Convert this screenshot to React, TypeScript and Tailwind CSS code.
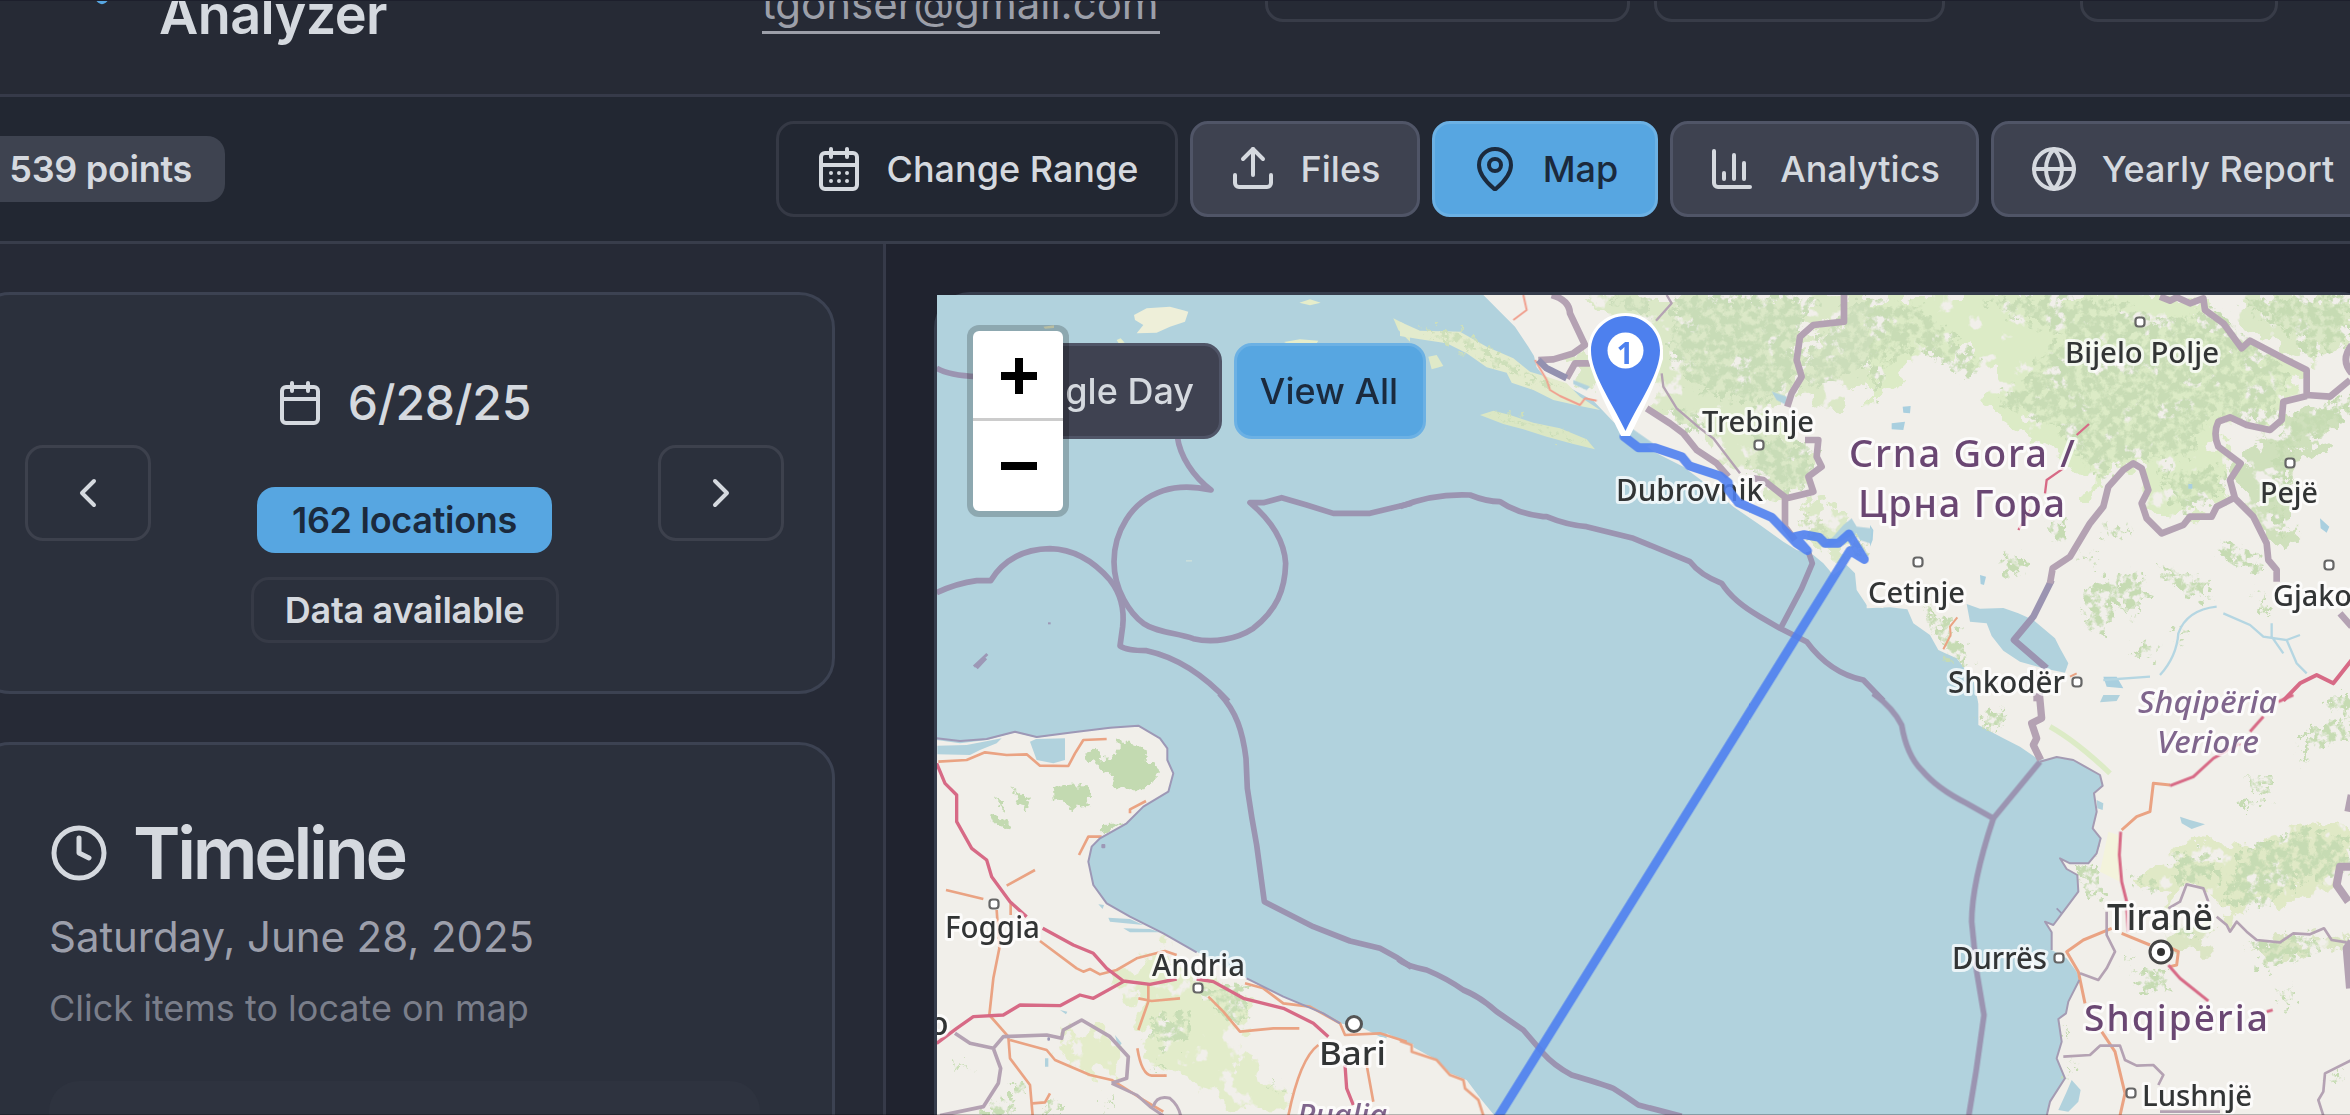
import React from "react";
import {
  Calendar,
  CalendarDays,
  ChevronLeft,
  ChevronRight,
  Clock,
  Globe,
  MapPin,
} from "lucide-react";

type Pt = { x: number; y: number };

function UploadIcon() {
  return (
    <svg className="size-12 shrink-0" viewBox="0 0 24 24" fill="none" stroke="currentColor" strokeWidth="2" strokeLinecap="round" strokeLinejoin="round">
      <path d="M21 15v4a2 2 0 0 1-2 2H5a2 2 0 0 1-2-2v-4" />
      <path d="M17 7l-5-5-5 5" />
      <path d="M12 2v13" />
    </svg>
  );
}

function ChartIcon() {
  return (
    <svg className="size-12 shrink-0" viewBox="0 0 24 24" fill="none" stroke="currentColor" strokeWidth="2" strokeLinecap="round" strokeLinejoin="round">
      <path d="M3 3v16a2 2 0 0 0 2 2h16" />
      <path d="M8 17v-3" />
      <path d="M13 17V5" />
      <path d="M18 17V9" />
    </svg>
  );
}

function NavButton({ tone, icon, label, className = "" }: { tone: "outline" | "solid" | "active"; icon: React.ReactNode; label: string; className?: string }) {
  const tones = {
    outline: "border-[#353945] bg-[#222732] text-[#d5d9df]",
    solid: "border-[#505567] bg-[#3e4250] text-[#d5d9df]",
    active: "border-[#6cb1e4] bg-[#57a6e1] text-[#1b2a3d]",
  };
  return (
    <button className={`flex h-24 shrink-0 items-center justify-center gap-6 whitespace-nowrap rounded-[18px] border-[3px] pb-px pr-px text-[36px] font-medium ${tones[tone]} ${className}`}>
      {icon}
      {label}
    </button>
  );
}

function Header() {
  return (
    <header className="flex h-[97px] shrink-0 items-start overflow-hidden border-b-[3px] border-[#363a49] bg-[#262a35]">
      <MapPin className="-mt-[65px] ml-[66px] size-[72px] shrink-0 text-[#57a6e1]" strokeWidth={2} />
      <h1 className="-mt-[18px] ml-[21px] w-[603px] shrink-0 text-[54px] font-semibold leading-[66px] tracking-[-0.6px] text-[#d5d9df]">Analyzer</h1>
      <a className="-mt-[26px] h-[60px] w-[398px] shrink-0 whitespace-nowrap border-b-[3px] border-[#9c9fa9] text-[42px] leading-[60px] text-[#9c9fa9]">tgonser@gmail.com</a>
      <div className="-mt-[74px] ml-[105px] h-24 w-[365px] shrink-0 rounded-[18px] border-[3px] border-[#383c48]" />
      <div className="-mt-[74px] ml-[24px] h-24 w-[291px] shrink-0 rounded-[18px] border-[3px] border-[#383c48]" />
      <div className="-mt-[74px] ml-[135px] h-24 w-[198px] shrink-0 rounded-[18px] border-[3px] border-[#383c48]" />
    </header>
  );
}

function Toolbar() {
  return (
    <div className="flex h-[147px] shrink-0 items-center border-b-[3px] border-[#383d4b] bg-[#222732]">
      <div className="flex h-[66px] w-[225px] shrink-0 items-center justify-end whitespace-nowrap rounded-r-[18px] bg-[#3e4350] pb-px pr-[33px] text-[36px] font-semibold tracking-[-0.3px] text-[#d5d9df]">539 points</div>
      <div className="ml-[551px] flex gap-3">
        <NavButton className="w-[402px]" tone="outline" icon={<CalendarDays className="size-12 shrink-0" />} label="Change Range" />
        <NavButton className="w-[230px]" tone="solid" icon={<UploadIcon />} label="Files" />
        <NavButton className="w-[226px]" tone="active" icon={<MapPin className="size-12 shrink-0" />} label="Map" />
        <NavButton className="w-[309px]" tone="solid" icon={<ChartIcon />} label="Analytics" />
        <NavButton className="w-[383px]" tone="solid" icon={<Globe className="size-12 shrink-0" />} label="Yearly Report" />
      </div>
    </div>
  );
}

function StepButton({ children }: { children: React.ReactNode }) {
  return <button className="flex h-24 w-[126px] items-center justify-center rounded-[18px] border-[3px] border-[#3d414d] text-[#d5d9df]">{children}</button>;
}

function Sidebar() {
  return (
    <aside className="-ml-[74px] flex w-[960px] shrink-0 flex-col gap-12 border-r-[3px] border-[#363a49] bg-[#262a36] p-12">
      <section className="flex h-[402px] shrink-0 items-center justify-between rounded-[36px] border-[3px] border-[#3c4252] bg-[#2b303c] p-12">
        <StepButton><ChevronLeft className="size-12" /></StepButton>
        <div className="flex flex-col items-center gap-6">
          <div className="flex h-[120px] items-center gap-6 pr-0.5 text-[48px] font-medium tracking-[-0.2px] text-[#d5d9df]">
            <Calendar className="size-12" />
            6/28/25
          </div>
          <div className="flex h-[66px] w-[295px] items-center justify-center rounded-[18px] bg-[#57a6e1] pb-px text-[36px] font-semibold tracking-[-0.3px] text-[#1b2a3d]">162 locations</div>
          <div className="flex h-[66px] w-[308px] items-center justify-center rounded-[18px] border-[3px] border-[#363a46] pb-px text-[36px] font-semibold tracking-[-0.3px] text-[#d5d9df]">Data available</div>
        </div>
        <StepButton><ChevronRight className="size-12" /></StepButton>
      </section>
      <section className="h-[600px] shrink-0 rounded-[36px] border-[3px] border-[#3c4252] bg-[#2b303c] p-[72px]">
        <h2 className="flex h-[72px] items-center gap-6 text-[72px] font-semibold leading-none tracking-[-3.3px] text-[#d5d9df]">
          <Clock className="size-[60px]" />
          Timeline
        </h2>
        <p className="mt-[18px] text-[42px] leading-[60px] tracking-[-0.06px] text-[#9c9fab]">Saturday, June 28, 2025</p>
        <p className="mt-[17px] text-[36px] leading-[48px] text-[#7a7e8a]">Click items to locate on map</p>
        <div className="mt-[49px] h-[200px] rounded-[30px] bg-[#2e333f]" />
      </section>
    </aside>
  );
}

/* Tile artwork is drawn at three units per pixel. */
const TILE_W: Pt = { x: 930, y: 280 };
const TILE_N: Pt = { x: 1400, y: 280 };
const TILE_E: Pt = { x: 1870, y: 280 };
const TILE_SW: Pt = { x: 930, y: 695 };
const TILE_S: Pt = { x: 1400, y: 695 };
const TILE_SE: Pt = { x: 1870, y: 695 };

function Tile({ at, children }: { at: Pt; children: React.ReactNode }) {
  return <g transform={`translate(${at.x} ${at.y}) scale(0.33333)`}>{children}</g>;
}

const LAND = "#f1efea";
const WATER = "#b1d2dd";

function Land() {
  return (
    <g fill={LAND}>
      <Tile at={TILE_W}>
        <path d="M612 105L650 85 720 80 775 95 765 125 720 140 680 158 620 160 640 135 615 120Z" fill="#eeefd9" />
        <path d="M1108 68L1140 58 1172 68 1140 76ZM560 180L572 175 584 188 566 190ZM1062 186L1110 178 1165 182 1160 190 1070 190ZM340 140L372 136 372 144 345 146Z" fill="#e6edca" />
        <path d="M1390 115L1420 130 1440 150V185L1405 150Z" fill="#dfe9c6" />
        <path d="M768 840h18v5h-18Z" fill="#c9dedb" />
      </Tile>
      <Tile at={TILE_N}>
        <path d="M245 40L300 95 345 140 385 200 402 228 410 262 440 300 500 318 580 362 640 425 710 478 770 520 850 560 930 620 1000 680 1080 735 1150 785 1190 810 1240 825 1270 850 1300 885 1340 855 1365 880 1370 930 1400 975 1450 985V40Z" />
        <path d="M0 125L60 152 180 155 260 200 340 235 390 275 440 290 500 310 540 350 600 390 540 378 460 360 400 330 335 308 320 278 260 262 200 220 140 190 60 178 0 168Z" fill="#e3ebcd" />
        <path d="M85 230L110 225 130 258 95 268Z" fill="#dfe9c8" />
        <path d="M240 405L280 392 330 405 400 428 480 445 560 478 585 508 520 492 440 470 370 448 310 432Z" fill="#dbe7c4" />
      </Tile>
      <Tile at={TILE_E}>
        <path d="M-10 40H1450V1270H325L310 1200 260 1135 205 1110 180 1065 130 1030 112 988 60 982 -10 985Z" />
      </Tile>
      <Tile at={TILE_SE}>
        <path d="M325 -10V90L400 130 450 155 508 195 560 188 610 195 640 212 690 240 698 272 672 295 680 350 668 400 692 430 680 475 655 505 600 505 570 490 590 522 622 540 625 590 580 650 550 690 525 680 545 712 545 765 590 790 620 830 628 855 595 920 588 955 565 972 575 1040 560 1090 585 1150 540 1220 530 1270H1450V-10Z" />
        <path d="M560 640L575 655" stroke="#9b97b4" strokeWidth="5" />
      </Tile>
      <Tile at={TILE_SW}>
        <path d="M20 135L90 145 170 135 255 112 320 128 430 112 540 100 625 92 690 130 712 160 712 195 730 235 715 290 640 335 590 385 510 430 485 455 475 500 490 570 530 625 600 665 700 715 800 770 950 850 1060 905 1180 955 1230 985 1300 1000 1350 1025 1450 1048V1270H20Z" />
      </Tile>
      <Tile at={TILE_S}>
        <path d="M-40 1015L0 1035 50 1062 110 1095 150 1135 200 1155 245 1215 290 1270H-40Z" />
      </Tile>
    </g>
  );
}

function Greens() {
  return (
    <>
      <g filter="url(#woodland)">
        <Tile at={TILE_N}>
          <path d="M560 45H1320V130L1200 150 1180 360 1120 400 1250 540 1220 620 1150 650 1060 590 1000 570 900 470 780 380 760 200 620 120Z" fill="#dbe8c7" />
          <path d="M1340 45H1440V260L1350 360 1220 380 1210 200 1260 145 1340 130Z" fill="#dbe8c7" />
          <path d="M500 240L560 215 600 330 540 320ZM1200 680L1330 700 1380 790 1300 840 1220 760Z" fill="#dbe8c7" />
        </Tile>
        <Tile at={TILE_E}>
          <path d="M0 45H870L1000 70 1080 200 1280 260 1300 340 1230 360 1220 430 1050 400 1040 510 1090 560 1060 650 930 720 850 730 820 560 740 560 690 640 600 560 480 440 340 380 380 260 180 200 0 380Z" fill="#dcebc6" />
          <path d="M1060 45H1440V180L1320 240 1180 180Z" fill="#dbe8c7" />
          <path d="M1230 420L1440 360V460L1280 520 1260 760 1220 800 1120 670 1110 560Z" fill="#cfe0bc" />
        </Tile>
        <Tile at={TILE_SE}>
          <path d="M800 540L980 440 1140 450 1240 430 1300 390 1440 400V560L1250 630 1160 600 1110 660 960 560 900 620Z" fill="#e0e9c6" />
          <path d="M890 680L1030 700 1000 770 920 770ZM1120 740L1340 720 1440 760 1350 770 1310 740 1210 820Z" fill="#dbe5c4" />
        </Tile>
        <Tile at={TILE_SW}>
          <path d="M540 860L700 760 780 850 940 880 960 980 900 1040 1000 1160 1080 1200 1060 1250 960 1240 760 1160 640 1100 620 950Z" fill="#e2ecca" />
          <path d="M400 1020L460 990 540 1040 590 1090 560 1150 440 1120Z" fill="#e4ecca" />
        </Tile>
      </g>
      <g filter="url(#patches)">
        <Tile at={TILE_N}>
          <path d="M820 50L1250 50 1200 140 1180 330 1060 370 900 330 820 240Z" fill="#c8dcb7" />
          <path d="M1060 460L1240 500 1230 600 1150 640 1060 580ZM800 380L880 400 940 460 860 440Z" fill="#c8dcb7" />
          <path d="M620 60L760 50 740 110ZM1360 60L1440 60 1440 240 1230 330 1220 220Z" fill="#cbddba" />
          <path d="M60 150L190 160 320 240 400 285 500 330 400 310 300 255 180 200ZM270 402L400 430 560 485 440 460Z" fill="#cddfb9" />
          <path d="M1210 690L1260 720 1300 800 1220 760ZM1340 760L1400 790 1390 840Z" fill="#cfdfbb" />
        </Tile>
        <Tile at={TILE_E}>
          <path d="M20 60L130 70 330 240 300 300 150 200 60 220 0 380V60ZM330 60L700 60 860 120 700 200 560 160ZM540 200L1030 90 1260 280 1200 430 1020 400 960 520 760 540 700 600 540 430 380 370 460 300Z" fill="#c8dcb5" />
          <path d="M1120 60L1440 50V180L1320 220 1260 160ZM1230 430L1310 400 1440 350V400L1270 500 1240 780 1200 720ZM860 580L1060 560 1060 640 940 690Z" fill="#c6dbb3" />
          <path d="M400 820L460 830 460 880 410 890ZM545 730L585 720 580 780 550 780ZM630 820L680 830 640 845ZM690 740L790 760 720 770ZM650 930L800 870 830 920 800 1010 740 960 690 1060 650 1040ZM860 860L1020 900 1010 960 930 930ZM800 1095L870 1105 840 1130 800 1120ZM930 1030L950 1060 925 1090ZM1160 920L1200 990 1180 1000ZM160 980L240 1030 300 1160 230 1120ZM1050 780L1180 850 1160 880 1060 830Z" fill="#c6dbb3" />
        </Tile>
        <Tile at={TILE_SE}>
          <path d="M330 50L400 50 390 110 350 100ZM620 505L670 510 705 630 660 590ZM1135 250L1200 250 1200 310 1160 290ZM1105 320L1160 320 1150 335 1110 332ZM790 540L850 550 860 590 810 580ZM900 490L1020 470 1040 540 940 570ZM1120 460L1300 400 1440 440V540L1280 560 1180 640 1060 620ZM1130 740L1200 745 1340 720 1330 780 1240 790 1190 830ZM900 700L980 690 960 730ZM790 840L880 830 890 890 800 880ZM1215 910L1260 870 1265 930ZM750 780L800 780 780 800ZM575 985L600 1020 590 1030ZM595 1090L610 1130 600 1150ZM1375 1140L1410 1130 1400 1165ZM1295 120L1440 60V130L1320 160 1300 210ZM1370 0L1440 0V50L1380 40Z" fill="#c6dbb3" />
        </Tile>
        <Tile at={TILE_SW}>
          <path d="M235 1165L275 1160 285 1195 260 1210 238 1200ZM340 1230L380 1215 400 1260 340 1260ZM180 1215L260 1235 250 1262 170 1262ZM80 1105L115 1105 100 1125 78 1130ZM520 1225L545 1215 545 1245ZM670 1095L705 1110 700 1130ZM1020 1170L1070 1180 1060 1210ZM800 870L940 880 950 980 880 970ZM660 970L780 960 760 1040 690 1060Z" fill="#c8ddb5" />
        </Tile>
      </g>
      <g filter="url(#ragged)">
        <Tile at={TILE_SW}>
          <path d="M470 170L500 165 510 190 560 185 560 130 600 150 640 155 645 200 680 195 680 245 655 280 560 280 540 235 475 200ZM370 275L470 270 480 330 430 345 375 310ZM250 280L300 320 290 350 270 320ZM180 360L240 380 230 400 190 385ZM190 300L225 325 220 345ZM520 390L580 388 540 410 515 412Z" fill="#c3dab1" />
        </Tile>
      </g>
      <Tile at={TILE_SE}>
        <path d="M540 95Q620 140 720 235" stroke="#dcebc6" strokeWidth="16" fill="none" />
        <path d="M715 410L745 420 750 560 690 530Z" fill="#f3f3dc" />
      </Tile>
    </>
  );
}

function InlandWater() {
  return (
    <g fill={WATER}>
      <Tile at={TILE_E}>
        <path d="M290 972L330 986 400 984 445 1000 490 1020 555 1075 570 1105 595 1150 585 1178 520 1165 450 1145 400 1112 365 1068 350 1030 300 1025Z" />
        <path d="M65 430L105 425 100 450 65 448ZM98 380L122 378 120 400 100 398ZM330 885L348 890 342 915 332 912ZM0 735L10 750 8 780 0 800ZM1350 715L1378 740 1370 758 1352 745ZM700 1190L740 1190 760 1225 710 1220ZM955 612h12v14h-12Z" fill="#a9cfdf" />
        <path d="M870 1185Q920 1130 925 1060 950 990 1040 980M1060 1000L1140 1035 1180 1070 1250 1080 1280 1150 1310 1180M1250 1080L1290 1065M700 1200L840 1190M1205 1030V1070L1240 1120" fill="none" stroke="#b5d6e2" strokeWidth="7" />
      </Tile>
      <Tile at={TILE_N}>
        <path d="M1330 735L1355 715 1370 740 1415 745 1410 790 1380 780 1370 760 1290 800 1270 795 1300 770ZM1115 335L1160 350 1160 375 1130 360ZM420 250L460 265 480 285 430 262Z" />
        <path d="M660 420L760 490 740 500 640 440ZM520 300L570 320 560 330 520 312Z" />
      </Tile>
      <Tile at={TILE_SE}>
        <path d="M605 1155L632 1185 625 1220 595 1250 565 1245 590 1190ZM930 365L960 375 1005 388 965 402 935 385ZM680 315L700 325 698 345 682 340ZM700 0L750 0 740 18 690 22ZM672 425L690 430 690 455 672 450Z" />
      </Tile>
      <Tile at={TILE_SW}>
        <path d="M22 152L110 150 215 130 200 145 150 165 120 180 22 178ZM300 140L318 132 405 130 405 195 370 205 320 195ZM535 668L600 672 640 690 540 680ZM580 700L660 702 690 712 600 712Z" />
        <path d="M555 1020L575 1045 565 1060ZM390 945L412 950 408 958ZM505 628L522 630 518 642ZM345 1090h10v25h-10Z" />
      </Tile>
    </g>
  );
}

function Borders() {
  return (
    <g fill="none" strokeLinejoin="round">
      <g stroke="#9b94b1" strokeWidth="17">
        <Tile at={TILE_W}>
          <path d="M20 265Q60 287 140 290M742 470C750 530 790 590 843 630Q760 612 700 632C600 665 552 760 552 845C552 930 600 1000 640 1030C680 1058 740 1058 790 1076C850 1090 920 1078 970 1045C1040 990 1065 930 1067 850C1062 770 1010 710 960 668L1000 668 1055 653 1130 675 1210 700H1320L1445 670" />
          <path d="M20 938Q80 910 140 902L182 902Q240 808 360 806Q460 808 540 900Q587 960 578 1040L570 1098Q590 1112 650 1112Q780 1140 895 1264" />
        </Tile>
        <Tile at={TILE_SW}>
          <path d="M868 -5C920 50 938 110 948 190L952 280Q965 370 980 450L1003 620 1150 695 1260 738 1350 760Q1400 785 1445 817" />
        </Tile>
        <Tile at={TILE_S}>
          <path d="M-5 792Q15 812 80 825Q140 850 190 885Q240 905 290 950L370 1005 430 1075Q460 1110 515 1140Q600 1165 640 1180Q680 1205 715 1230L845 1264M1420 -5L1445 12" />
        </Tile>
        <Tile at={TILE_N}>
          <path d="M0 680Q100 640 210 645Q260 665 300 665Q350 700 430 710L440 710Q500 735 560 740L700 775 870 845Q900 885 965 910Q1000 965 1080 1010L1140 1045 1220 1085Q1290 1180 1390 1200L1450 1262M1225 815L1237 850 1205 925 1140 1048" />
        </Tile>
        <Tile at={TILE_SE}>
          <path d="M10 -5Q70 40 95 90Q110 180 155 225Q200 280 290 325L370 370 510 200" />
          <path d="M370 370C330 490 305 600 305 680Q312 750 320 830L342 960 318 1130 296 1264" />
        </Tile>
        <Tile at={TILE_E}>
          <path d="M545 900L490 1010 432 1080 530 1165" strokeWidth="20" />
        </Tile>
      </g>
      <g stroke="#b4a2b3" strokeWidth="20">
        <Tile at={TILE_N}>
          <path d="M455 45Q508 60 510 100L555 195 520 220 460 238 415 240M500 295L525 250H570M740 385L810 430 850 460 890 510 950 550 985 590" />
          <path d="M415 240L440 265 500 295" stroke="#9391b0" />
          <path d="M1332 40V125L1240 135 1200 170 1190 240 1205 290 1175 340 1162 380M1215 480H1255L1250 530 1265 560 1225 590 1240 635 1160 655 1090 600 1060 595M1155 655V740L1185 780" />
          <path d="M768 122L815 70 800 45M785 280L790 320 830 385 900 445 940 475 1020 580" strokeWidth="7" />
        </Tile>
        <Tile at={TILE_E}>
          <path d="M870 50L900 62 920 52 960 70 1000 55 1005 90 1060 130 1115 205 1140 182 1250 240 1310 270V345L1380 350 1440 300M1445 195Q1410 240 1445 280M1310 348L1240 365 1235 420 1200 450 1130 435 1080 412 1045 425Q1028 460 1045 500L1112 550 1080 600 1095 655 1150 710 1190 790 1195 840 1220 870V905M1410 1000L1445 1040" />
          <path d="M1090 655L1040 680 1025 710H960L940 735 875 760 830 715 815 670 835 630 815 565 790 550 760 570 715 620 700 680 660 730 600 830 548 865 540 910" />
          <path d="M500 1240V1264" />
        </Tile>
        <Tile at={TILE_SE}>
          <path d="M508 -5L515 70 485 85 500 130 490 150 512 195" strokeWidth="22" />
          <path d="M1445 515L1410 515 1400 570 1435 620M1445 300L1435 350M1445 740L1430 760 1440 880" strokeWidth="24" />
          <path d="M895 640L930 620 950 568 1000 580 1015 620M1040 665L1070 690 1080 710 1100 680 1130 710 1160 735 1230 742 1270 715 1320 718 1362 700 1385 735 1430 742M710 650V720L735 770 710 820 685 855 630 835M580 1085L660 1080 690 1052H750L765 1095 800 1112 850 1110 880 1140 865 1170M1445 1095L1365 1135 1360 1190 1345 1215 1360 1262M870 1250L1050 1250" strokeWidth="8" />
        </Tile>
        <Tile at={TILE_SW}>
          <path d="M75 1015L120 1045 190 1060 220 1025 350 1020 395 1030 400 1005 455 975 540 1025 595 1085 590 1150 545 1165M190 1060L212 1120 205 1165 160 1235 30 1262" strokeWidth="11" />
          <path d="M545 1165L620 1200 660 1235 700 1262M670 1235Q680 1200 720 1210 745 1230 752 1262" strokeWidth="9" />
        </Tile>
      </g>
      <g stroke="#9d98b6" strokeWidth="6">
        <Tile at={TILE_SW}>
          <path d="M20 130L90 138 170 132 255 110 320 126 430 112 540 98 625 92 690 130 712 160 712 195 730 235 715 290 640 335 590 385 510 430 485 455 475 500 490 570 530 625 600 665 700 715 800 772M950 850L1060 905 1180 955 1230 985M355 1030h2v4h-2ZM517 450h6v7h-6Z" />
        </Tile>
        <Tile at={TILE_SE}>
          <path d="M510 200L560 186 610 195 640 212 690 240 698 272 672 295 680 350 668 400 692 430 680 475 655 505 600 505 570 490 590 522 622 540 625 590 580 650 550 690 525 680 545 712 545 765M628 855L595 920 588 955 565 972 575 1040 560 1090 585 1150 540 1220 530 1262" stroke="#a49bb3" />
        </Tile>
        <Tile at={TILE_W}>
          <path d="M132 1160L172 1122M140 1165L168 1135" strokeWidth="9" />
          <path d="M354 1030h8" />
        </Tile>
      </g>
    </g>
  );
}

function Roads() {
  return (
    <g fill="none" strokeLinejoin="round">
      <g stroke="#eaa383" strokeWidth="8">
        <Tile at={TILE_SW}>
          <path d="M25 200L110 195 165 172 230 180 290 178 330 212 415 213 435 175 460 135 530 132M600 355V343L648 318M447 480L475 425H515M230 572L315 525M48 585L160 612M242 625V660M200 645L208 760 190 850 178 960 235 1025 240 1090 300 1170 308 1262M330 738L440 820 460 830 480 822 510 838 560 825 620 790 705 768 740 780M308 1225L345 1222 360 1195M240 1035L350 1065 375 1095 480 1140 545 1155 640 1215 700 1250M655 870V920L625 1005M625 910L665 918 750 910M622 1060Q635 1140 665 1142H710M835 905L880 950 930 1010 1030 1000H1108M945 865L1000 880 1060 925 1140 935 1230 985 1245 1020 1350 1015 1430 1040M1165 1050Q1110 1090 1075 1262M1310 1110L1330 1220" />
        </Tile>
        <Tile at={TILE_S}>
          <path d="M0 1038L35 1050V1070L110 1095 150 1140 190 1155 195 1180 235 1215 250 1262" />
        </Tile>
        <Tile at={TILE_N}>
          <path d="M370 45L380 90 340 120M405 240L440 300 450 330 480 348 540 375 555 355 590 362" stroke="#f0a08f" strokeWidth="6" />
        </Tile>
        <Tile at={TILE_E}>
          <path d="M262 1012L240 1040 242 1065 220 1108M600 1190L620 1180" strokeWidth="6" />
        </Tile>
        <Tile at={TILE_SE}>
          <path d="M900 270L850 265 840 350 800 365 755 405M725 700L640 735 590 770 625 830 645 925M695 1010L735 1070 765 1195 750 1262M755 715L840 750M905 760L925 770 920 810 900 815" strokeWidth="9" />
        </Tile>
      </g>
      <g stroke="#d76a86" strokeWidth="10">
        <Tile at={TILE_SW}>
          <path d="M20 205L45 265 80 300V380L125 460 170 495 185 545 240 620 290 665M338 700L430 750 490 775 530 820 580 858 660 868 740 852M20 1045L80 1000 130 965 220 960 270 930 390 932 450 900 490 910 580 860M800 852L850 860 940 910 1060 940 1150 985 1195 1025M1245 1110L1250 1180 1270 1230" />
        </Tile>
        <Tile at={TILE_E}>
          <path d="M657 432L620 465M580 565L530 600 525 640M480 690L445 750" strokeWidth="7" />
          <path d="M1240 1262L1290 1210 1340 1185 1390 1210 1445 1140" strokeWidth="12" />
        </Tile>
        <Tile at={TILE_SE}>
          <path d="M1270 0L1225 20M1180 65L1140 110M1110 145L1030 190 970 245 900 272M752 410L748 480 755 560 770 620M770 640L775 710M895 810L930 850 1015 918M1190 950L1208 945" strokeWidth="9" />
        </Tile>
      </g>
    </g>
  );
}

type Place = { t: string; x: number; y: number; w?: number; s: number; kind?: "country" | "region" };

const PLACES: Place[] = [
  { t: "Trebinje", x: 1702, y: 432, w: 112, s: 29 },
  { t: "Dubrovnik", x: 1616, y: 501, w: 147, s: 30 },
  { t: "Bijelo Polje", x: 2065, y: 363, w: 154, s: 29 },
  { t: "Pejë", x: 2260, y: 503, w: 58, s: 29 },
  { t: "Gjakovë", x: 2273, y: 606, w: 110, s: 29 },
  { t: "Cetinje", x: 1868, y: 603, w: 97, s: 29 },
  { t: "Shkodër", x: 1948, y: 693, w: 117, s: 30 },
  { t: "Tiranë", x: 2107, y: 930, w: 106, s: 36 },
  { t: "Durrës", x: 1952, y: 969, w: 95, s: 30 },
  { t: "Lushnjë", x: 2142, y: 1106, w: 110, s: 29 },
  { t: "Foggia", x: 945, y: 938, w: 95, s: 30 },
  { t: "Andria", x: 1152, y: 976, w: 93, s: 30 },
  { t: "Bari", x: 1319, y: 1065, w: 67, s: 33 },
  { t: "o", x: 929, y: 1035, s: 32 },
  { t: "Crna Gora /", x: 1849, y: 467, w: 226, s: 38, kind: "country" },
  { t: "Црна Гора", x: 1858, y: 517, w: 207, s: 38, kind: "country" },
  { t: "Shqipëria", x: 2084, y: 1031, w: 184, s: 37, kind: "country" },
  { t: "Shqipëria", x: 2138, y: 713, w: 139, s: 31, kind: "region" },
  { t: "Veriore", x: 2157, y: 753, w: 102, s: 31, kind: "region" },
  { t: "Puglia", x: 1297, y: 1126, w: 90, s: 31, kind: "region" },
];

const TOWNS: Pt[] = [
  { x: 1759, y: 445 }, { x: 2140, y: 322 }, { x: 2290, y: 463 }, { x: 2329, y: 565 },
  { x: 1918, y: 562 }, { x: 2077, y: 682 }, { x: 2059, y: 958 }, { x: 2131, y: 1093 },
  { x: 994, y: 904 }, { x: 1198, y: 988 },
];

function Labels() {
  return (
    <g fontFamily="'Noto Sans', sans-serif" strokeLinejoin="round">
      {TOWNS.map((p) => (
        <rect key={p.x} x={p.x - 4.5} y={p.y - 4.5} width="9" height="9" rx="3" fill="#fff" stroke="#666" strokeWidth="2.2" />
      ))}
      <circle cx="1354" cy="1024" r="7.5" fill="#fff" stroke="#555" strokeWidth="3" />
      <circle cx="2161" cy="952" r="11" fill="#fff" stroke="#444" strokeWidth="3" />
      <circle cx="2161" cy="952" r="4" fill="#333" />
      {PLACES.map((p) => {
        const fill = p.kind === "country" ? "#6b4673" : p.kind === "region" ? "#80668d" : "#333436";
        const shared = {
          x: p.x,
          y: p.y,
          fontSize: p.s,
          textLength: p.w,
          lengthAdjust: p.kind === "country" ? "spacing" : "spacingAndGlyphs",
          fontStyle: p.kind === "region" ? "italic" : "normal",
          fontWeight: 500,
        };
        return (
          <text key={p.t + p.y} {...shared} fill={fill} stroke="#fff" strokeOpacity="0.75" strokeWidth="6" paintOrder="stroke">
            {p.t}
          </text>
        );
      })}
    </g>
  );
}

function MapCanvas() {
  return (
    <svg className="block h-[820px] w-[1413px]" viewBox="937 295 1413 820">
      <defs>
        <filter id="soft" x="0" y="0" width="1" height="1">
          <feGaussianBlur stdDeviation="0.7" />
        </filter>
        <filter id="ragged" filterUnits="userSpaceOnUse" x="937" y="295" width="1413" height="820">
          <feTurbulence type="fractalNoise" baseFrequency="0.12" numOctaves="3" seed="7" result="n" />
          <feDisplacementMap in="SourceGraphic" in2="n" scale="14" xChannelSelector="R" yChannelSelector="G" />
        </filter>
        <filter id="woodland" filterUnits="userSpaceOnUse" x="937" y="295" width="1413" height="820">
          <feTurbulence type="fractalNoise" baseFrequency="0.045" numOctaves="4" seed="4" result="n" />
          <feDisplacementMap in="SourceGraphic" in2="n" scale="50" xChannelSelector="R" yChannelSelector="G" result="d" />
          <feColorMatrix in="n" type="matrix" values="0 0 0 0 0  0 0 0 0 0  0 0 0 0 0  0 0 -12 0 8.3" result="m" />
          <feComposite in="d" in2="m" operator="in" />
        </filter>
        <filter id="patches" filterUnits="userSpaceOnUse" x="937" y="295" width="1413" height="820">
          <feTurbulence type="fractalNoise" baseFrequency="0.12" numOctaves="4" seed="11" result="n" />
          <feDisplacementMap in="SourceGraphic" in2="n" scale="30" xChannelSelector="R" yChannelSelector="G" result="d" />
          <feColorMatrix in="n" type="matrix" values="0 0 0 0 0  0 0 0 0 0  0 0 0 0 0  0 0 -5 0 3.2" result="m" />
          <feComposite in="d" in2="m" operator="in" />
          <feGaussianBlur stdDeviation="0.6" />
        </filter>
      </defs>
      <rect x="937" y="295" width="1413" height="820" fill={WATER} />
      <g filter="url(#soft)">
        <rect x="930" y="290" width="1430" height="830" fill={WATER} />
        <Land />
        <Greens />
        <InlandWater />
        <Roads />
        <Borders />
        <Labels />
      </g>
      <Tile at={TILE_N}>
        <path
          d="M672 470L715 503H765L845 530 867 557 960 588 985 608V630L1015 668 1115 712 1190 790 1222 812 1185 770 1212 764 1258 772 1275 790H1315L1347 762 1393 838 1350 812 297 2507"
          fill="none"
          stroke="#4f80ef"
          strokeOpacity="0.9"
          strokeWidth="27"
          strokeLinecap="round"
          strokeLinejoin="round"
        />
      </Tile>
    </svg>
  );
}

function Marker() {
  return (
    <svg className="absolute left-[651px] top-[18px] h-[123px] w-[75px]" viewBox="0 0 75 123">
      <path d="M37.500 0C16 0 0 17 0 37.500V46C8 74 21 98 33 123H42C54 98 67 74 75 46V37.500C75 17 59 0 37.500 0Z" fill="#fff" />
      <path d="M37.500 3C18.500 3 3 18.500 3 37.500C3 60 22 86 37.500 118C53 86 72 60 72 37.500C72 18.500 56.500 3 37.500 3Z" fill="#4d80ee" />
      <circle cx="37.500" cy="37.500" r="18" fill="#fff" />
      <text x="37" y="50.500" textAnchor="middle" fontFamily="'Noto Sans', sans-serif" fontWeight="700" fontSize="30" fill="#4d80ee">1</text>
    </svg>
  );
}

function MapPanel() {
  return (
    <main className="min-w-0 flex-1 bg-[#20232f] pl-12 pt-12">
      <div className="h-[900px] w-[1442px] rounded-[36px] border-[3px] border-[#363d4c]">
        <div className="relative h-[820px] w-[1413px]">
          <MapCanvas />
          <Marker />
          <div className="absolute left-12 top-12 flex gap-3 whitespace-nowrap text-[36px] font-medium">
            <button className="flex h-24 w-[237px] items-center justify-end rounded-[18px] border-[3px] border-[#505567] bg-[#3f4251] pb-px pr-[25px] text-[#d5d9df]">Single Day</button>
            <button className="flex h-24 w-[192px] items-center justify-center rounded-[18px] border-[3px] border-[#6cb1e4] bg-[#57a6e1] pb-px pr-0.5 text-[#1b2a3d]">View All</button>
          </div>
          <div className="absolute left-[30px] top-[30px] flex h-[192px] w-[102px] flex-col overflow-hidden rounded-[12px] border-[6px] border-black/20 bg-white bg-clip-padding">
            <button className="flex h-[90px] items-center justify-center border-b-[3px] border-[#ccc] pl-0.5 pt-0.5">
              <svg className="size-9" viewBox="0 0 36 36"><path d="M0 14H14V0h8v14h14v8H22v14h-8V22H0Z" /></svg>
            </button>
            <button className="flex h-[90px] items-center justify-center pl-0.5">
              <svg className="size-9" viewBox="0 0 36 36"><path d="M0 14h36v8H0Z" /></svg>
            </button>
          </div>
        </div>
      </div>
    </main>
  );
}

export default function App() {
  return (
    <div className="relative flex h-[1115px] w-[2350px] flex-col overflow-hidden bg-[#20232f] font-['Inter',sans-serif]">
      <Header />
      <Toolbar />
      <div className="flex min-h-0 flex-1 overflow-hidden">
        <Sidebar />
        <MapPanel />
      </div>
      <div className="absolute inset-x-0 top-0 h-px bg-[#1d1f2c]" />
      <div className="absolute inset-x-0 bottom-0 h-px bg-black/25" />
    </div>
  );
}
